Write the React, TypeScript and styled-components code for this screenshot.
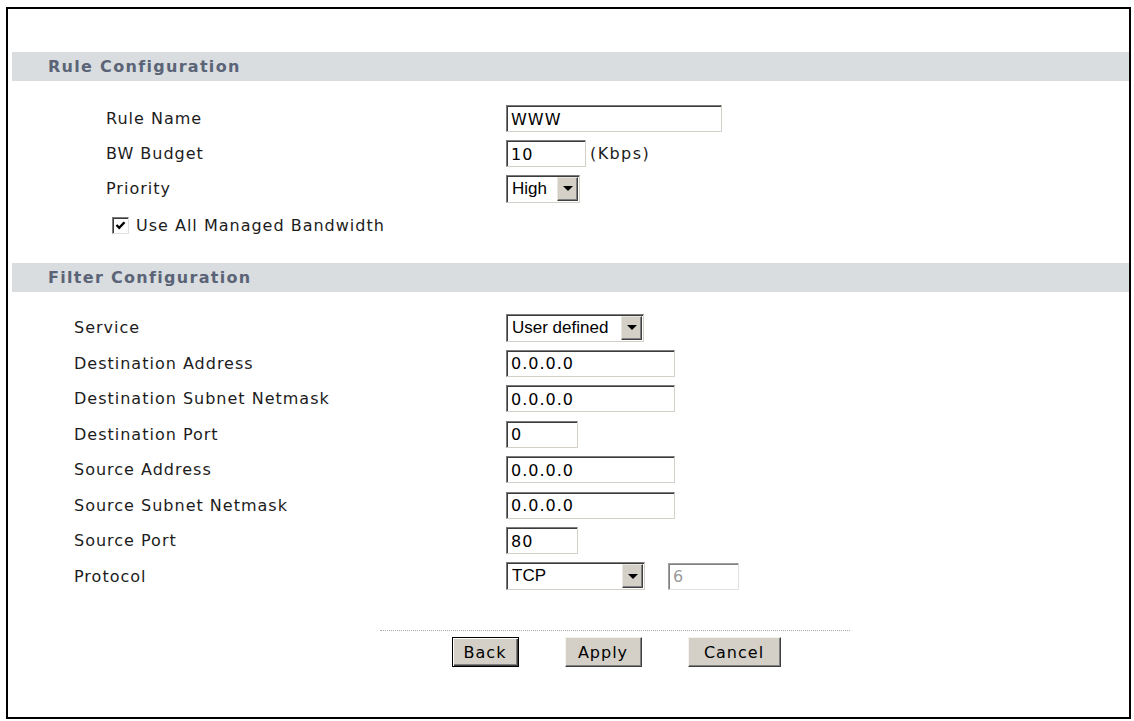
import styled, { createGlobalStyle } from 'styled-components';

const GlobalStyle = createGlobalStyle`
  body {
    margin: 0;
    background: #fff;
  }
`;

const Frame = styled.div`
  box-sizing: border-box;
  height: 712px;
  margin: 7px 3px 0 6px;
  padding: 43px 0 0 4px;
  border: 2px solid #000;
  font-family: 'DejaVu Sans', Verdana, sans-serif;
  color: #1c1c1c;
`;

const SectionBar = styled.div`
  display: flex;
  align-items: center;
  height: 29px;
  padding-left: 36px;
  background: #d9dde0;
  color: #5b6477;
  font-size: 16px;
  font-weight: bold;
  letter-spacing: 1.3px;
`;

const Fields = styled.div<{ $top: number; $bottom: number }>`
  display: flex;
  flex-direction: column;
  padding: ${(p) => p.$top}px 0 ${(p) => p.$bottom}px 0;
`;

const Row = styled.div<{ $h: number; $indent: number }>`
  display: flex;
  align-items: center;
  height: ${(p) => p.$h}px;
  padding-left: ${(p) => p.$indent}px;
`;

const Label = styled.div<{ $w: number }>`
  flex-shrink: 0;
  width: ${(p) => p.$w}px;
  font-size: 16px;
  letter-spacing: 1px;
  white-space: nowrap;
`;

const Controls = styled.div<{ $gap?: number }>`
  display: flex;
  align-items: center;
  gap: ${(p) => p.$gap ?? 4}px;
`;

const TextBox = styled.input<{ $w: number }>`
  box-sizing: border-box;
  width: ${(p) => p.$w}px;
  height: 27px;
  margin: 0;
  padding: 1px 0 0 4px;
  border: 1px solid;
  border-color: #7b7b7b #d4d0c8 #d4d0c8 #7b7b7b;
  box-shadow: inset 1px 1px 0 #3c3c3c;
  background: #fff;
  color: #000;
  font-family: 'DejaVu Sans', Verdana, sans-serif;
  font-size: 16px;
  letter-spacing: 1px;
  outline: none;

  &:disabled {
    color: #9a9a9a;
    border-color: #a0a0a0 #e0e0e0 #e0e0e0 #a0a0a0;
    box-shadow: inset 1px 1px 0 #808080;
  }
`;

const Unit = styled.span`
  font-size: 16px;
  letter-spacing: 1.4px;
`;

const DropBox = styled.div<{ $w: number }>`
  box-sizing: border-box;
  display: flex;
  width: ${(p) => p.$w}px;
  height: 28px;
  padding: 1px;
  border: 1px solid;
  border-color: #7b7b7b #d4d0c8 #d4d0c8 #7b7b7b;
  box-shadow: inset 1px 1px 0 #3c3c3c;
  background: #fff;
`;

const DropText = styled.div`
  flex: 1;
  display: flex;
  align-items: center;
  padding-left: 4px;
  font-family: 'Liberation Sans', Arial, sans-serif;
  font-size: 17px;
  color: #000;
  white-space: nowrap;
`;

const DropButton = styled.div`
  box-sizing: border-box;
  display: flex;
  align-items: center;
  justify-content: center;
  width: 21px;
  background: #d4d0c8;
  border: 1px solid;
  border-color: #e8e6e1 #404040 #404040 #e8e6e1;
  box-shadow: inset -1px -1px 0 #808080;

  &::after {
    content: '';
    border-left: 5px solid transparent;
    border-right: 5px solid transparent;
    border-top: 5px solid #000;
  }
`;

const CheckLine = styled.label`
  display: flex;
  align-items: center;
  gap: 7px;
  font-size: 16px;
  letter-spacing: 1px;
`;

const CheckBox = styled.span`
  box-sizing: border-box;
  display: flex;
  align-items: center;
  justify-content: center;
  width: 17px;
  height: 17px;
  border: 1px solid;
  border-color: #7b7b7b #e0e0e0 #e0e0e0 #7b7b7b;
  box-shadow: inset 1px 1px 0 #3c3c3c;
  background: #fff;
`;

const Footer = styled.div`
  width: 470px;
  margin: 36px 0 0 368px;
  border-top: 1px dotted #a8a8a8;
`;

const ButtonRow = styled.div`
  display: flex;
  justify-content: center;
  gap: 46px;
  padding: 6px 0 0 2px;
`;

const Button = styled.button<{ $w: number; $default?: boolean }>`
  box-sizing: border-box;
  width: ${(p) => p.$w}px;
  height: 30px;
  padding: 0;
  background: #d4d0c8;
  border: 1px solid;
  border-color: ${(p) => (p.$default ? '#000' : '#f4f3ef #404040 #404040 #f4f3ef')};
  box-shadow: ${(p) =>
    p.$default
      ? 'inset 1px 1px 0 #fff, inset -1px -1px 0 #404040, inset -2px -2px 0 #808080'
      : 'inset -1px -1px 0 #808080'};
  color: #000;
  font-family: 'DejaVu Sans', Verdana, sans-serif;
  font-size: 16px;
  letter-spacing: 1px;
`;

const Select = ({ w, value }: { w: number; value: string }) => (
  <DropBox $w={w}>
    <DropText>{value}</DropText>
    <DropButton />
  </DropBox>
);

const filterRows: { label: string; kind: 'select' | 'text'; value: string; w: number }[] = [
  { label: 'Service', kind: 'select', value: 'User defined', w: 138 },
  { label: 'Destination Address', kind: 'text', value: '0.0.0.0', w: 169 },
  { label: 'Destination Subnet Netmask', kind: 'text', value: '0.0.0.0', w: 169 },
  { label: 'Destination Port', kind: 'text', value: '0', w: 72 },
  { label: 'Source Address', kind: 'text', value: '0.0.0.0', w: 169 },
  { label: 'Source Subnet Netmask', kind: 'text', value: '0.0.0.0', w: 169 },
  { label: 'Source Port', kind: 'text', value: '80', w: 72 },
];

const App = () => {
  return (
    <>
      <GlobalStyle />
      <Frame>
        <SectionBar>Rule Configuration</SectionBar>
        <Fields $top={20} $bottom={19}>
          <Row $h={35} $indent={94}>
            <Label $w={400}>Rule Name</Label>
            <TextBox $w={216} defaultValue="WWW" />
          </Row>
          <Row $h={35} $indent={94}>
            <Label $w={400}>BW Budget</Label>
            <Controls>
              <TextBox $w={80} defaultValue="10" />
              <Unit>(Kbps)</Unit>
            </Controls>
          </Row>
          <Row $h={35} $indent={94}>
            <Label $w={400}>Priority</Label>
            <Select w={74} value="High" />
          </Row>
          <Row $h={38} $indent={100}>
            <CheckLine>
              <CheckBox>
                <svg width="11" height="11" viewBox="0 0 11 11">
                  <path d="M1.5 5 L4.2 7.8 L9.5 2.2" fill="none" stroke="#000" strokeWidth="2.4" />
                </svg>
              </CheckBox>
              Use All Managed Bandwidth
            </CheckLine>
          </Row>
        </Fields>

        <SectionBar>Filter Configuration</SectionBar>
        <Fields $top={18} $bottom={0}>
          {filterRows.map((r) => (
            <Row key={r.label} $h={35.5} $indent={62}>
              <Label $w={432}>{r.label}</Label>
              {r.kind === 'select' ? (
                <Select w={r.w} value={r.value} />
              ) : (
                <TextBox $w={r.w} defaultValue={r.value} />
              )}
            </Row>
          ))}
          <Row $h={35.5} $indent={62}>
            <Label $w={432}>Protocol</Label>
            <Controls $gap={23}>
              <Select w={139} value="TCP" />
              <TextBox $w={71} defaultValue="6" disabled />
            </Controls>
          </Row>
        </Fields>

        <Footer>
          <ButtonRow>
            <Button $w={67} $default>
              Back
            </Button>
            <Button $w={77}>Apply</Button>
            <Button $w={93}>Cancel</Button>
          </ButtonRow>
        </Footer>
      </Frame>
    </>
  );
};

export default App;
